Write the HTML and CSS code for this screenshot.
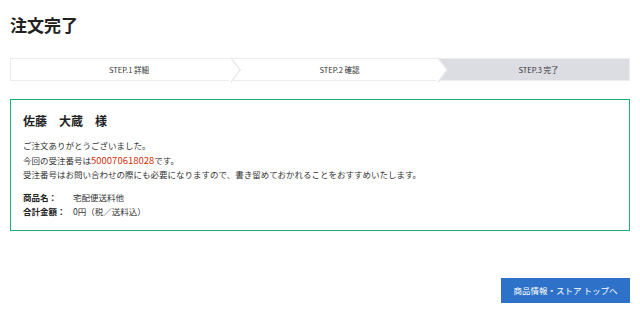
FILE: index.html
```html
<!DOCTYPE html>
<html lang="ja">
<head>
    <meta charset="UTF-8">
    <meta name="viewport" content="width=device-width, initial-scale=1.0">
    <title>注文完了</title>
    <link rel="stylesheet" href="styles.css">
</head>
<body>
    <div class="page">
        <h1 class="page-title">注文完了</h1>

        <ol class="steps">
            <li class="step">STEP.1 詳細</li>
            <li class="step">STEP.2 確認</li>
            <li class="step current">STEP.3 完了</li>
        </ol>

        <div class="complete-box">
            <h2 class="customer">佐藤　大蔵　様</h2>
            <p class="message">
                ご注文ありがとうございました。<br>
                今回の受注番号は<span class="order-no">500070618028</span>です。<br>
                受注番号はお問い合わせの際にも必要になりますので、書き留めておかれることをおすすめいたします。
            </p>
            <dl class="summary">
                <div class="summary-row">
                    <dt>商品名：</dt>
                    <dd>宅配便送料他</dd>
                </div>
                <div class="summary-row">
                    <dt>合計金額：</dt>
                    <dd>0円（税／送料込）</dd>
                </div>
            </dl>
        </div>

        <div class="actions">
            <a href="#" class="btn-top">商品情報・ストア トップへ</a>
        </div>
    </div>
</body>
</html>
```

FILE: styles.css
```css
body {
    margin: 0;
    padding: 0;
    background: #fff;
    color: #333;
    font-family: "Noto Sans CJK JP", "Noto Sans", sans-serif;
}
.page {
    padding: 0 10px;
}
.page-title {
    margin: 15px 0 0;
    font-size: 17px;
    line-height: 20px;
    font-weight: bold;
    color: #222;
}
.steps {
    display: grid;
    grid-template-columns: 220px 207px 1fr;
    margin: 23px 0 0;
    padding: 0;
    list-style: none;
    border: 1px solid #ececec;
    height: 21px;
}
.step {
    position: relative;
    font-size: 7.5px;
    line-height: 21px;
    text-align: center;
    padding-left: 10px;
    color: #333;
    background: #fff;
}
.step:first-child {
    padding-left: 16px;
}
.step::after {
    content: "";
    position: absolute;
    top: 3px;
    right: -8px;
    width: 15px;
    height: 15px;
    background: #fff;
    border-top: 1px solid #e2e2e2;
    border-right: 1px solid #e2e2e2;
    transform: rotate(45deg) skew(8deg, 8deg);
    z-index: 1;
}
.step.current {
    background: #dcdce3;
}
.step.current::after {
    display: none;
}
.complete-box {
    margin-top: 18px;
    border: 1px solid #1dae72;
    padding: 13px 12px 12px;
}
.customer {
    margin: 0;
    font-size: 12px;
    line-height: 16px;
    font-weight: bold;
    color: #222;
}
.message {
    margin: 9px 0 0;
    font-size: 8.5px;
    line-height: 14.5px;
}
.order-no {
    color: #d3300f;
    font-size: 9.5px;
}
.summary {
    margin: 8px 0 0;
    font-size: 8.5px;
    line-height: 14px;
}
.summary-row {
    display: flex;
}
.summary dt {
    width: 50px;
    font-weight: bold;
    color: #222;
}
.summary dd {
    margin: 0;
}
.actions {
    display: flex;
    justify-content: flex-end;
    margin-top: 47px;
}
.btn-top {
    display: block;
    width: 129px;
    height: 25px;
    line-height: 25px;
    background: #2d72c8;
    color: #fff;
    font-size: 8.5px;
    text-align: center;
    text-decoration: none;
}
```
